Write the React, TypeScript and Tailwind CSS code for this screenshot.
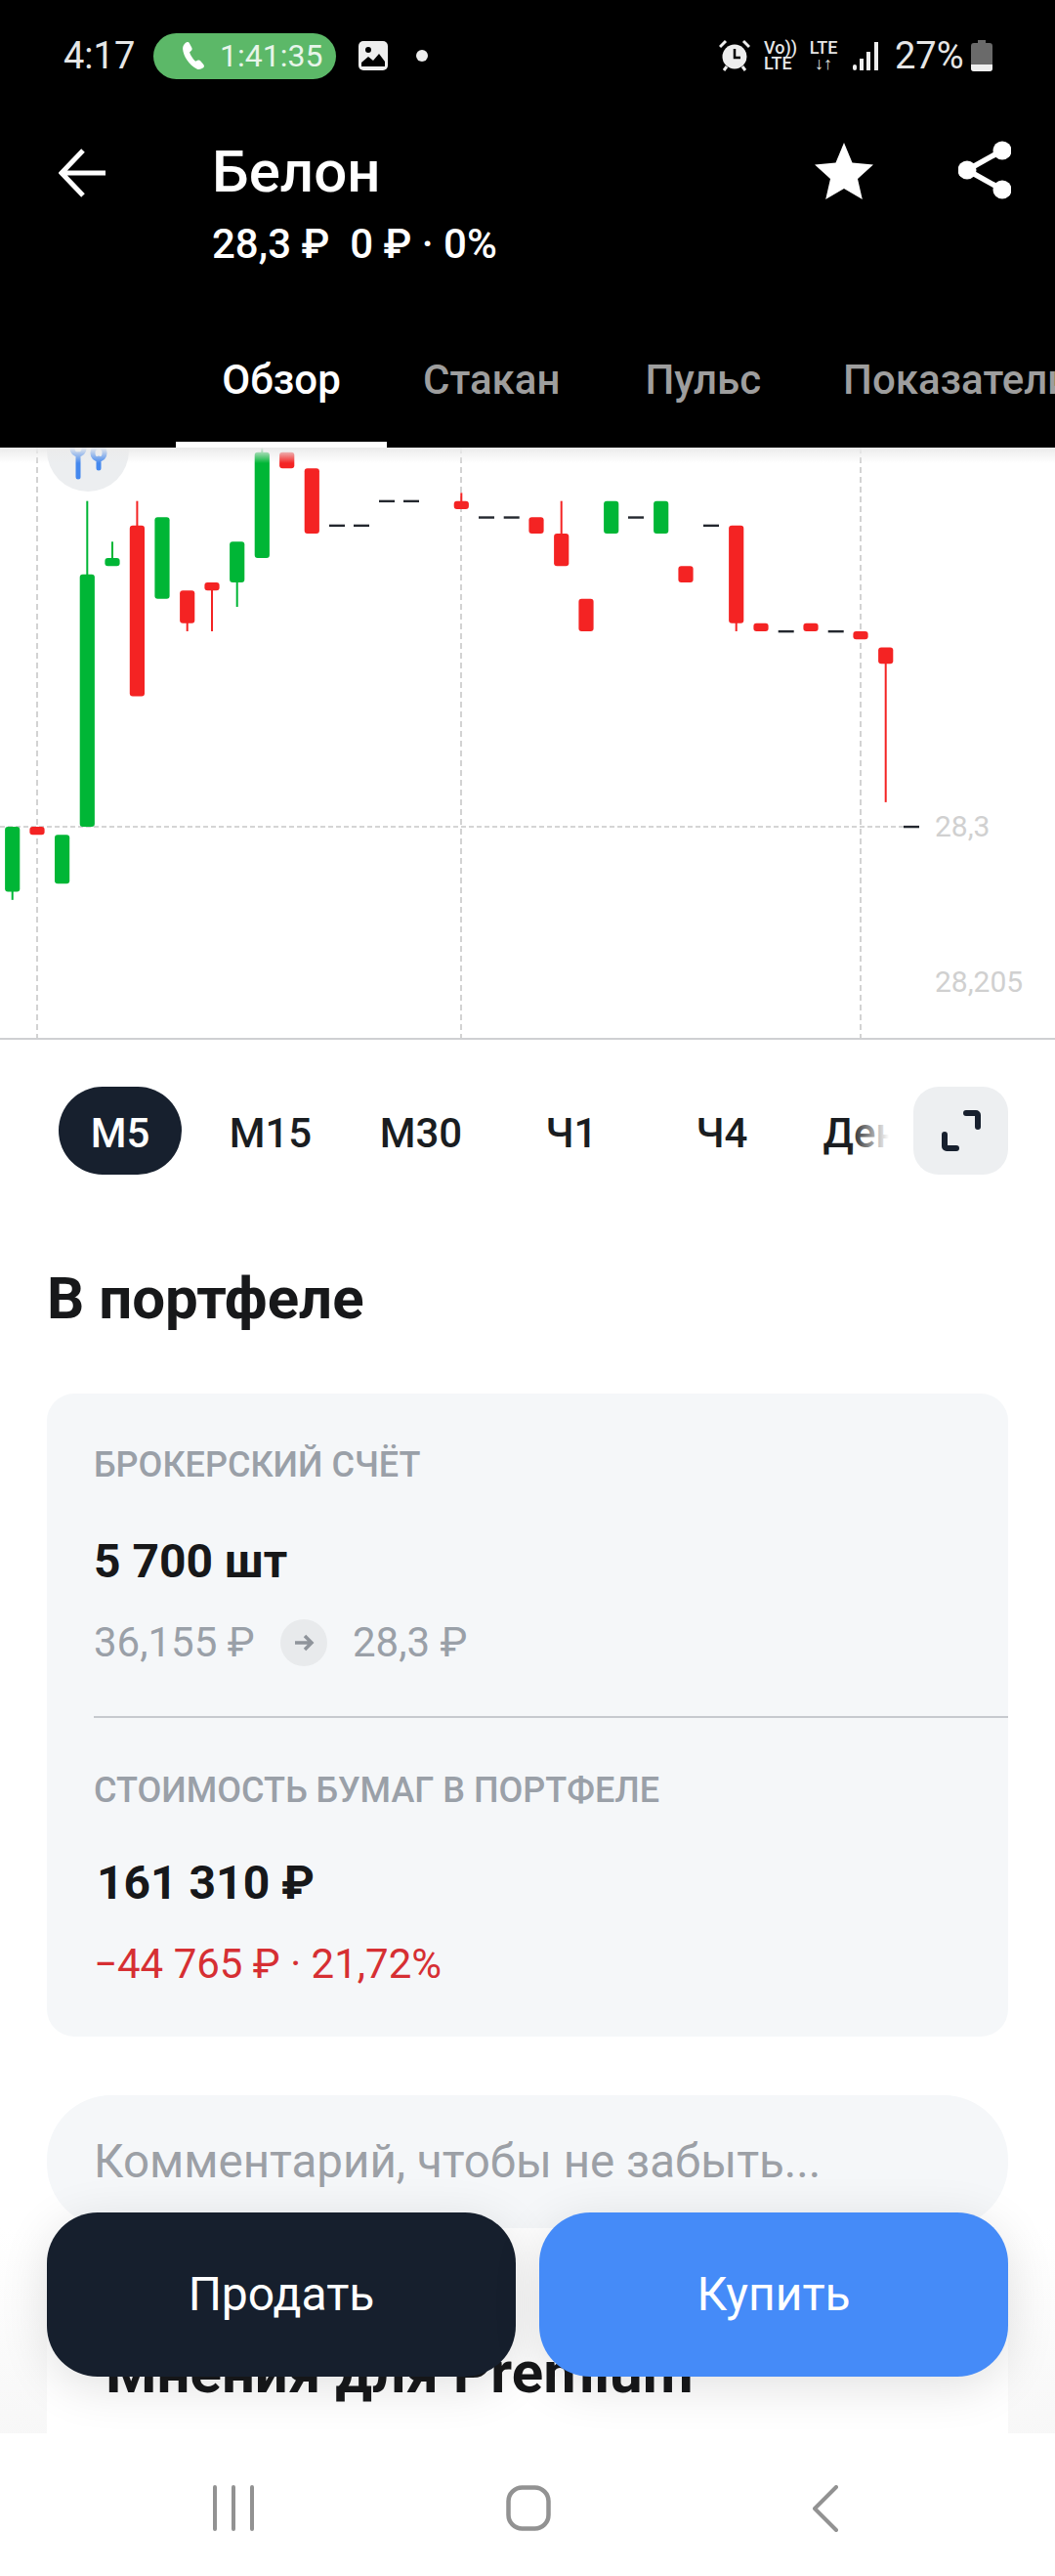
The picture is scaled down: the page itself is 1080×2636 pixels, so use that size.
import React from "react";

const GREEN = "#00b636";
const RED = "#f42323";
const yL = (l: number) => 4.7 + 8.33 * l;

type C = { x: number; c: string; t: number; b: number; wt?: number; wb?: number };
const candles: C[] = [
  { x: 12.7, c: GREEN, t: 46, b: 54, wb: 55 },
  { x: 38, c: RED, t: 46, b: 47 },
  { x: 63.6, c: GREEN, t: 47, b: 53 },
  { x: 89.3, c: GREEN, t: 15, b: 46, wt: 6 },
  { x: 115, c: GREEN, t: 13, b: 14, wt: 11 },
  { x: 140.4, c: RED, t: 9, b: 30, wt: 6 },
  { x: 166, c: GREEN, t: 8, b: 18 },
  { x: 191.7, c: RED, t: 17, b: 21, wb: 22 },
  { x: 217, c: RED, t: 16, b: 17, wb: 22 },
  { x: 242.7, c: GREEN, t: 11, b: 16, wb: 19 },
  { x: 268.3, c: GREEN, t: 0, b: 13, wt: -1 },
  { x: 293.7, c: RED, t: 0, b: 2 },
  { x: 319.3, c: RED, t: 2, b: 10 },
  { x: 472.3, c: RED, t: 6, b: 7, wt: 5 },
  { x: 549, c: RED, t: 8, b: 10 },
  { x: 574.7, c: RED, t: 10, b: 14, wt: 6 },
  { x: 600, c: RED, t: 18, b: 22 },
  { x: 625.7, c: GREEN, t: 6, b: 10 },
  { x: 676.7, c: GREEN, t: 6, b: 10 },
  { x: 702, c: RED, t: 14, b: 16 },
  { x: 753.7, c: RED, t: 9, b: 21, wb: 22 },
  { x: 779, c: RED, t: 21, b: 22 },
  { x: 830, c: RED, t: 21, b: 22 },
  { x: 881, c: RED, t: 22, b: 23 },
  { x: 906.7, c: RED, t: 24, b: 26, wb: 43 },
];
const dashes: [number, number][] = [
  [345, 9], [370, 9], [396, 6], [421, 6], [498, 8], [523.7, 8], [651, 8], [728, 9], [804.7, 22], [855.7, 22], [933, 46],
];

function Chart() {
  return (
    <div className="relative h-[606px] w-full border-b-2 border-[#cfd0d2]">
      <svg width="1080" height="604" className="block">
        {[38, 472, 881].map((x) => (
          <line key={x} x1={x} x2={x} y1={0} y2={604} stroke="#c8c8c8" strokeWidth="1.6" strokeDasharray="6 4" />
        ))}
        <line x1={0} x2={925} y1={388} y2={388} stroke="#c8c8c8" strokeWidth="1.6" strokeDasharray="5 3" />
        {candles.map((k) => (
          <g key={k.x} fill={k.c}>
            {k.wt !== undefined && <rect x={k.x - 1} width={2} y={yL(k.wt)} height={yL(k.t) - yL(k.wt) + 2} />}
            {k.wb !== undefined && <rect x={k.x - 1} width={2} y={yL(k.b) - 2} height={yL(k.wb) - yL(k.b) + 2} />}
            <rect x={k.x - 7.6} width={15.2} y={yL(k.t)} height={yL(k.b) - yL(k.t)} rx={3} />
          </g>
        ))}
        {dashes.map(([x, l]) => (
          <rect key={x} x={x - 8} width={16} y={yL(l) - 1} height={2.4} fill="#23272e" />
        ))}
      </svg>
      <span className="absolute left-[957px] top-[371px] text-[30px] leading-[34px] text-[#d0d0d0]">28,3</span>
      <span className="absolute left-[957px] top-[530px] text-[30px] leading-[34px] text-[#d0d0d0]">28,205</span>
      <div className="absolute left-[48px] top-[-39px] flex h-[84px] w-[84px] items-center justify-center rounded-full bg-[#eceef0]">
        <svg width="84" height="84" viewBox="0 0 84 84" fill="none" stroke="#4488ee" strokeWidth="5" strokeLinecap="round">
          <path d="M32 46v23" />
          <path d="M53 50v10" />
          <path d="M26 36v4a6 6 0 0 0 12 0v-4" />
          <rect x="47" y="38" width="12" height="13" rx="6" />
        </svg>
      </div>
      <div className="pointer-events-none absolute inset-x-0 top-0 h-[16px] bg-gradient-to-b from-[#ebebeb] to-transparent" />
    </div>
  );
}

const frames = ["M5", "M15", "M30", "Ч1", "Ч4", "День"];

function Frames() {
  return (
    <div className="mt-[48px] flex h-[90px] pl-[60px] pr-[48px]">
      <div className="relative flex w-[850px] gap-[28px] overflow-hidden">
        {frames.map((f, i) => (
          <div
            key={f}
            className={
              i === 0
                ? "flex h-[90px] w-[126px] shrink-0 items-center justify-center rounded-full bg-[#17202e] pt-[4px] text-[42px] font-medium text-white"
                : "flex h-[90px] w-[126px] shrink-0 items-center justify-center rounded-full pt-[4px] text-[42px] font-medium text-[#1a1d21]"
            }
          >
            {f}
          </div>
        ))}
        <div className="absolute right-0 top-0 h-full w-[40px] bg-gradient-to-r from-transparent to-white" />
      </div>
      <div className="ml-[25px] flex h-[90px] w-[97px] items-center justify-center rounded-[26px] bg-[#edeff1]">
        <svg width="44" height="44" viewBox="0 0 44 44" fill="none" stroke="#17202e" strokeWidth="6" strokeLinecap="round" strokeLinejoin="round">
          <path d="M27 4h10a2 2 0 0 1 2 2v12" />
          <path d="M17 40H7a2 2 0 0 1-2-2V26" />
        </svg>
      </div>
    </div>
  );
}

function Status() {
  return (
    <div className="flex h-[114px] items-center pl-[65px] text-[#e6e6e6]">
      <span className="w-[92px] text-[38px] leading-none">4:17</span>
      <div className="flex h-[47px] w-[187px] items-center rounded-full bg-[#5cb868] pl-[24px]">
        <svg width="34" height="38" viewBox="0 0 24 24" fill="#fff">
          <path d="M6.6 2.5c1-.7 2-.4 2.6.6l1.6 3c.4.8.3 1.600-.3 2.200l-1.300 1.200c.7 2.200 2.400 4.800 4.300 6.500l1.500-.7c.8-.4 1.600-.2 2.200.5l2.100 2.500c.7.9.5 2-.4 2.600-1.300.9-3 1.300-4.500.6C9 18.700 4.600 12.200 4.300 7c-.1-1.800 1-3.400 2.300-4.500z" />
        </svg>
        <span className="ml-[10px] text-[32px] leading-none text-[#e8f5ea]">1:41:35</span>
      </div>
      <svg className="ml-[22px]" width="32" height="32" viewBox="0 0 32 32">
        <rect x="1" y="1" width="30" height="30" rx="5" fill="#eee" />
        <circle cx="11" cy="10" r="3" fill="#000" />
        <path d="M4 27v-4l7-6 5 4 6-7 6 8v5z" fill="#000" />
      </svg>
      <span className="ml-[28px] h-[12px] w-[12px] rounded-full bg-[#eee]" />
      <div className="ml-auto flex items-center pr-[64px]">
        <svg width="32" height="34" viewBox="0 0 32 34">
          <circle cx="16" cy="18" r="12.500" fill="#eee" />
          <path d="M16 10v9h6" fill="none" stroke="#000" strokeWidth="2.500" />
          <path d="M1 8l6-6M31 8l-6-6M5 32l3-4M27 32l-3-4" stroke="#eee" strokeWidth="3" />
        </svg>
        <div className="ml-[14px] flex w-[34px] flex-col text-[18px] font-medium leading-[16px]">
          <span>Vo))</span>
          <span>LTE</span>
        </div>
        <div className="ml-[10px] flex w-[34px] flex-col items-center text-[18px] font-medium leading-[16px]">
          <span>LTE</span>
          <span>↓↑</span>
        </div>
        <svg className="ml-[12px]" width="30" height="30" viewBox="0 0 30 30" fill="#eee">
          <rect x="1" y="24" width="4" height="6" rx="2" />
          <rect x="8" y="18" width="4" height="12" />
          <rect x="15" y="11" width="4" height="19" />
          <rect x="23" y="1" width="4" height="29" />
        </svg>
        <span className="ml-[14px] w-[72px] text-[38px] leading-none">27%</span>
        <svg className="ml-[6px]" width="22" height="32" viewBox="0 0 22 32">
          <path d="M7 0h8v3h4a3 3 0 0 1 3 3v23a3 3 0 0 1-3 3H3a3 3 0 0 1-3-3V6a3 3 0 0 1 3-3h4z" fill="#6a6a6a" />
          <path d="M0 25h22v4a3 3 0 0 1-3 3H3a3 3 0 0 1-3-3z" fill="#eee" />
        </svg>
      </div>
    </div>
  );
}

function Header() {
  return (
    <header className="relative z-10 h-[458px] shrink-0 bg-black text-white">
      <Status />
      <div className="flex h-[238px] items-start pl-[60px] pr-[45px]">
        <svg className="mt-[38px]" width="50" height="50" viewBox="0 0 50 50" fill="none" stroke="#fff" strokeWidth="5">
          <path d="M48 25H4M25 2L3 25l22 23" />
        </svg>
        <div className="ml-[107px] flex-1">
          <div className="mt-[28px] text-[60px] font-medium leading-[68px]">Белон</div>
          <div className="mt-[16px] whitespace-pre text-[42px] font-medium leading-[48px]">{"28,3 ₽  0 ₽ · 0%"}</div>
        </div>
        <svg className="mt-[32px]" width="60" height="58" viewBox="0 0 60 58" fill="#fff">
          <path d="M30 0l8.500 20.500L60 22.500 44 37l4.800 21L30 47 11.200 58 16 37 0 22.500l21.500-2z" />
        </svg>
        <svg className="ml-[87px] mt-[30px]" width="54" height="60" viewBox="0 0 54 60" fill="#fff">
          <circle cx="45" cy="10" r="9.500" />
          <circle cx="45" cy="50" r="9.500" />
          <circle cx="9" cy="30" r="9.500" />
          <path d="M45 10L9 30l36 20" fill="none" stroke="#fff" strokeWidth="5.500" />
        </svg>
      </div>
      <nav className="relative flex h-[106px] overflow-hidden whitespace-nowrap text-[42px] font-medium">
        <div className="ml-[180px] flex h-[100px] w-[216px] shrink-0 justify-center pt-[5px]">Обзор</div>
        <div className="ml-[37px] shrink-0 pt-[5px] text-[#9e9e9e]">Стакан</div>
        <div className="ml-[87px] shrink-0 pt-[5px] text-[#9e9e9e]">Пульс</div>
        <div className="ml-[84px] shrink-0 pt-[5px] text-[#9e9e9e]">Показатели</div>
        <div className="absolute bottom-0 left-[180px] h-[6px] w-[216px] bg-white" />
      </nav>
    </header>
  );
}

function Portfolio() {
  return (
    <>
      <section className="px-[48px]">
        <h2 className="mt-[93px] text-[60px] font-bold leading-[68px] text-[#17181a]">В портфеле</h2>
        <div className="mt-[63px] rounded-[28px] bg-[#f5f7f9] pb-[50px] pl-[48px]">
          <div className="pt-[51px] text-[36px] font-medium leading-[44px] text-[#9aa0a8]">БРОКЕРСКИЙ СЧЁТ</div>
          <div className="mt-[51px] text-[48px] font-bold leading-[52px] text-[#17181a]">5 700 шт</div>
          <div className="mt-[32px] flex h-[50px] items-center text-[42px] leading-[50px] text-[#9aa0a8]">
            <span className="w-[191px]">36,155 ₽</span>
            <span className="flex h-[48px] w-[48px] items-center justify-center rounded-full bg-[#e8eaec]">
              <svg width="22" height="22" viewBox="0 0 22 22" fill="none" stroke="#8f949b" strokeWidth="3.500">
                <path d="M2 11h17M12 4l7 7-7 7" />
              </svg>
            </span>
            <span className="ml-[26px]">28,3 ₽</span>
          </div>
          <div className="mt-[50px] h-[2px] bg-[#c6c9ce]" />
          <div className="mt-[52px] text-[36px] font-medium leading-[44px] text-[#9aa0a8]">СТОИМОСТЬ БУМАГ В ПОРТФЕЛЕ</div>
          <div className="ml-[3px] mt-[47px] text-[48px] font-bold leading-[52px] text-[#17181a]">161 310 ₽</div>
          <div className="mt-[33px] text-[42px] leading-[48px] text-[#d62f33]">−44 765 ₽ · 21,72%</div>
        </div>
        <div className="mt-[60px] flex h-[136px] items-center rounded-[66px] bg-[#f5f7f9] pl-[48px] pt-[2px] text-[47.5px] text-[#9ca0a6]">
          Комментарий, чтобы не забыть...
        </div>
      </section>
      <div className="h-[300px] bg-gradient-to-b from-white to-[#f4f4f4] px-[48px]">
        <div className="h-full bg-white pl-[60px] pt-[116px] text-[60px] font-bold leading-[64px] text-[#17181a]">
          Мнения для Premium
        </div>
      </div>
    </>
  );
}

function Actions() {
  return (
    <div className="absolute left-[48px] top-[2264px] z-20 flex w-[984px] gap-[24px]">
      <button className="flex h-[168px] flex-1 items-center justify-center rounded-[52px] bg-[#161f2d] text-[48px] text-white shadow-[0_10px_50px_rgba(0,0,0,0.12)]">
        Продать
      </button>
      <button className="flex h-[168px] flex-1 items-center justify-center rounded-[52px] bg-[#458bf8] text-[48px] text-white shadow-[0_10px_50px_rgba(0,0,0,0.12)]">
        Купить
      </button>
    </div>
  );
}

function SystemNav() {
  return (
    <div className="relative z-10 flex h-[146px] shrink-0 items-start bg-white pt-[53px]">
      <svg className="ml-[218px]" width="44" height="47" viewBox="0 0 44 47" stroke="#929292" strokeWidth="4" strokeLinecap="round">
        <path d="M2 2v43M21 2v43M40 2v43" />
      </svg>
      <svg className="ml-[256px]" width="46" height="47" viewBox="0 0 46 47" fill="none" stroke="#929292" strokeWidth="4.500">
        <rect x="2.500" y="2.500" width="41" height="42" rx="14" />
      </svg>
      <svg className="ml-[268px]" width="26" height="48" viewBox="0 0 26 48" fill="none" stroke="#929292" strokeWidth="4" strokeLinecap="round" strokeLinejoin="round">
        <path d="M24 2L2 24l22 22" />
      </svg>
    </div>
  );
}

export default function App() {
  return (
    <div
      className="relative flex h-[2636px] w-[1080px] flex-col overflow-hidden bg-white"
      style={{ fontFamily: "Roboto, 'Noto Sans', sans-serif" }}
    >
      <Header />
      <main className="min-h-0 flex-1 overflow-hidden">
        <Chart />
        <Frames />
        <Portfolio />
      </main>
      <Actions />
      <SystemNav />
    </div>
  );
}
